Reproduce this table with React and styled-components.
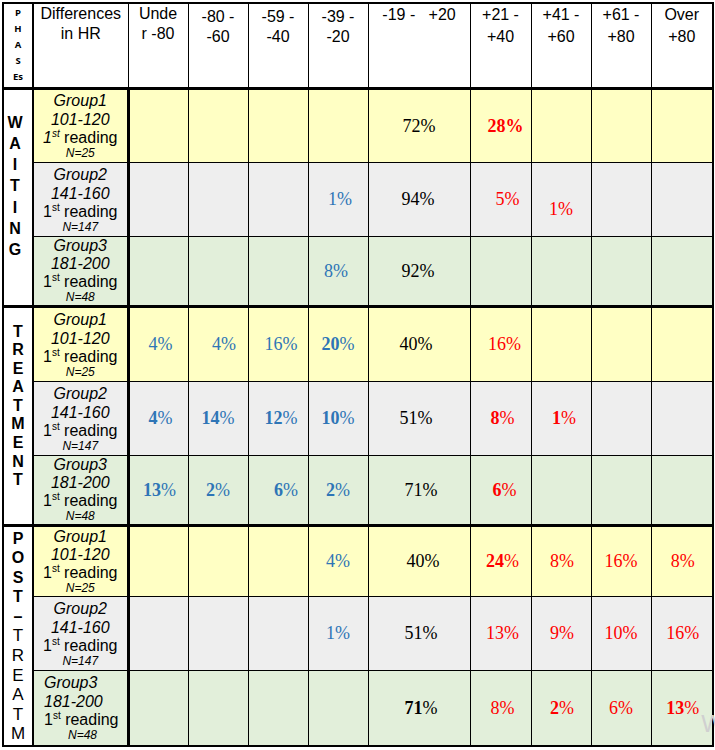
import React from 'react';
import styled, { createGlobalStyle } from 'styled-components';

const Global = createGlobalStyle`
  html, body {
    margin: 0;
    padding: 0;
    background: #fff;
  }
`;

const tints = {
  yellow: '#ffffc4',
  grey: '#eeeeee',
  green: '#e2efda',
};

const tones = {
  blue: '#2e75b6',
  red: '#ff0000',
  black: '#000000',
};

const Page = styled.div`
  position: relative;
  width: 715px;
  height: 750px;
  padding: 2px 0 0 2px;
  box-sizing: border-box;
  overflow: hidden;
`;

const Table = styled.table`
  border-collapse: collapse;
  table-layout: fixed;
  width: 711px;
  border: 2px solid #000;
  font-family: 'Liberation Sans', Arial, sans-serif;
  color: #000;
`;

const Col = styled.col`
  width: ${(p) => p.$w}px;
`;

const Row = styled.tr`
  height: ${(p) => p.$h}px;
`;

const HeadCell = styled.th`
  border: 1px solid #000;
  border-bottom: 3px solid #000;
  padding: ${(p) => p.$top}px 0 0 0;
  vertical-align: top;
  font-weight: normal;
  font-size: 16px;
  line-height: ${(p) => p.$lh}px;
  white-space: pre;
  text-align: center;
`;

const PhaseHead = styled.th`
  border: 1px solid #000;
  border-right: 2px solid #000;
  border-bottom: 3px solid #000;
  padding: 1px 0 0 0;
  vertical-align: top;
  font-family: 'Open Sans', 'Liberation Sans', sans-serif;
  font-weight: bold;
  font-size: 9.5px;
  line-height: 16px;
  text-align: center;
`;

const PhaseCell = styled.td`
  border: 1px solid #000;
  border-right: 2px solid #000;
  border-top: 3px solid #000;
  padding: ${(p) => p.$top}px 0 0 0;
  vertical-align: top;
  background: #fff;
`;

const Letters = styled.div`
  display: flex;
  flex-direction: column;
  align-items: center;
  padding-right: ${(p) => p.$right || 0}px;
`;

const Letter = styled.span`
  font-size: ${(p) => (p.$bold ? 16 : 17)}px;
  font-weight: ${(p) => (p.$bold ? 'bold' : 'normal')};
  line-height: ${(p) => p.$lh}px;
`;

const GroupCell = styled.td`
  border: 1px solid #000;
  border-right: 3px solid #000;
  border-top: ${(p) => (p.$first ? '3px' : '1px')} solid #000;
  background: ${(p) => tints[p.$bg]};
  padding: 0 0 0 ${(p) => (p.$left ? 10 : 0)}px;
  vertical-align: middle;
  text-align: ${(p) => (p.$left ? 'left' : 'center')};
  font-size: 16px;
`;

const Line = styled.div`
  line-height: ${(p) => p.$lh}px;
  font-style: ${(p) => (p.$italic ? 'italic' : 'normal')};
`;

const Small = styled.div`
  font-size: 12px;
  line-height: 13px;
  font-style: italic;
  padding-left: ${(p) => p.$indent || 0}px;
`;

const Sup = styled.sup`
  font-size: 10px;
  line-height: 0;
  vertical-align: 6px;
`;

const DataCell = styled.td`
  border: 1px solid #000;
  border-top: ${(p) => (p.$first ? '3px' : '1px')} solid #000;
  background: ${(p) => tints[p.$bg]};
  text-align: center;
  vertical-align: middle;
  padding: ${(p) => Math.max(p.$dy, 0)}px ${(p) => Math.max(-p.$dx * 2, 0)}px 0
    ${(p) => Math.max(p.$dx * 2, 0)}px;
  font-family: 'Liberation Serif', 'Times New Roman', serif;
  font-size: 18px;
  line-height: 20px;
  color: ${(p) => tones[p.$tone]};
`;

const Digits = styled.span`
  font-weight: ${(p) => (p.$bold ? 'bold' : 'normal')};
`;

const Mark = styled.span`
  position: absolute;
  right: -9px;
  bottom: 12px;
  font-family: 'Liberation Sans', Arial, sans-serif;
  font-size: 24px;
  color: #d0d0d0;
`;

const widths = [30, 95, 60, 60, 60, 60, 102, 61, 60, 60, 62];

const headers = [
  { t: 'Unde\nr -80', top: 0, lh: 20 },
  { t: '-80 -\n-60', top: 3, lh: 20 },
  { t: '-59 -\n-40', top: 3, lh: 20 },
  { t: '-39 -\n-20', top: 3, lh: 20 },
  { t: '-19 -   +20', top: 0, lh: 22 },
  { t: '+21 -\n+40', top: 0, lh: 22 },
  { t: '+41 -\n+60', top: 0, lh: 22 },
  { t: '+61 -\n+80', top: 0, lh: 22 },
  { t: 'Over\n+80', top: 0, lh: 22 },
];

const colTone = ['blue', 'blue', 'blue', 'blue', 'black', 'red', 'red', 'red', 'red'];

// n: digits, b: bold digits, all: bold incl. %, dx/dy nudges
const v = (n, opts = {}) => ({ n, ...opts });

const roomy = [19, 19, 18];
const tight = [18, 18, 18];

const sections = [
  {
    letters: 'WAITING'.split('').map((c) => ({ c, bold: true })),
    lh: 21.3,
    top: 22,
    right: 6,
    rows: [
      {
        h: 74, bg: 'yellow', g: 'Group1', r: '101-120', n: 'N=25', italicOne: true, lines: roomy,
        cells: [null, null, null, null, v('72'), v('28', { b: true, all: true, dx: 5 }), null, null, null],
      },
      {
        h: 74, bg: 'grey', g: 'Group2', r: '141-160', n: 'N=147', lines: roomy,
        cells: [null, null, null, v('1', { dx: 2 }), v('94', { dx: -1 }), v('5', { dx: 7 }), v('1', { dy: 20 }), null, null],
      },
      {
        h: 70, bg: 'green', g: 'Group3', r: '181-200', n: 'N=48', lines: tight,
        cells: [null, null, null, v('8', { dx: -2 }), v('92', { dx: -1 }), null, null, null, null],
      },
    ],
  },
  {
    letters: 'TREATMENT'.split('').map((c) => ({ c, bold: true })),
    lh: 18.6,
    top: 15,
    rows: [
      {
        h: 75, bg: 'yellow', g: 'Group1', r: '101-120', n: 'N=25', lines: roomy,
        cells: [v('4', { dx: 2 }), v('4', { dx: 6 }), v('16', { dx: 3 }), v('20', { b: true }), v('40', { dx: -3 }), v('16', { dx: 4 }), null, null, null],
      },
      {
        h: 74, bg: 'grey', g: 'Group2', r: '141-160', n: 'N=147', lines: roomy,
        cells: [v('4', { b: true, dx: 2 }), v('14', { b: true }), v('12', { b: true, dx: 3 }), v('10', { b: true }), v('51', { dx: -3 }), v('8', { b: true, dx: 2 }), v('1', { b: true, dx: 3 }), null, null],
      },
      {
        h: 70, bg: 'green', g: 'Group3', r: '181-200', n: 'N=48', lines: tight,
        cells: [v('13', { b: true, dx: 1 }), v('2', { b: true }), v('6', { b: true, dx: 8 }), v('2', { b: true }), v('71', { dx: 2 }), v('6', { b: true, dx: 4 }), null, null, null],
      },
    ],
  },
  {
    letters: [
      ...'POST–'.split('').map((c) => ({ c, bold: true })),
      ...'TREATM'.split('').map((c) => ({ c, bold: false })),
    ],
    lh: 19.6,
    top: 2,
    rows: [
      {
        h: 71, bg: 'yellow', g: 'Group1', r: '101-120', n: 'N=25', lines: tight,
        cells: [null, null, null, v('4'), v('40', { dx: 4 }), v('24', { b: true, dx: 2 }), v('8', { dx: 1 }), v('16'), v('8', { dx: 1 })],
      },
      {
        h: 74, bg: 'grey', g: 'Group2', r: '141-160', n: 'N=147', lines: roomy,
        cells: [null, null, null, v('1'), v('51', { dx: 2 }), v('13', { dx: 2 }), v('9', { dx: 1 }), v('10'), v('16', { dx: 1 })],
      },
      {
        h: 76, bg: 'green', g: 'Group3', r: '181-200', n: 'N=48', left: true, lines: roomy,
        cells: [null, null, null, null, v('71', { b: true, dx: 2 }), v('8', { dx: 2 }), v('2', { b: true, dx: 1 }), v('6'), v('13', { b: true, dx: 1 })],
      },
    ],
  },
];

function Value({ cell }) {
  if (cell.all) return <Digits $bold>{cell.n}%</Digits>;
  return (
    <>
      <Digits $bold={cell.b}>{cell.n}</Digits>%
    </>
  );
}

function GroupLabel({ row, first }) {
  const [a, b, c] = row.lines;
  return (
    <GroupCell $bg={row.bg} $first={first} $left={row.left}>
      <Line $italic $lh={a}>{row.g}</Line>
      <Line $italic $lh={b}>{row.r}</Line>
      <Line $lh={c}>
        {row.italicOne ? <i>1<Sup>st</Sup></i> : <>1<Sup>st</Sup></>} reading
      </Line>
      <Small $indent={row.left ? 24 : 0}>{row.n}</Small>
    </GroupCell>
  );
}

export default function App() {
  return (
    <Page>
      <Global />
      <Table>
        <colgroup>
          {widths.map((w, i) => (
            <Col key={i} $w={w} />
          ))}
        </colgroup>
        <thead>
          <Row $h={85}>
            <PhaseHead>
              P<br />H<br />A<br />S<br />Es
            </PhaseHead>
            <HeadCell $top={0} $lh={20}>{'Differences\nin HR'}</HeadCell>
            {headers.map((h, i) => (
              <HeadCell key={i} $top={h.top} $lh={h.lh}>
                {h.t}
              </HeadCell>
            ))}
          </Row>
        </thead>
        <tbody>
          {sections.map((s, si) =>
            s.rows.map((row, ri) => (
              <Row key={`${si}-${ri}`} $h={row.h}>
                {ri === 0 && (
                  <PhaseCell rowSpan={3} $top={s.top}>
                    <Letters $right={s.right}>
                      {s.letters.map((l, li) => (
                        <Letter key={li} $bold={l.bold} $lh={s.lh}>
                          {l.c}
                        </Letter>
                      ))}
                    </Letters>
                  </PhaseCell>
                )}
                <GroupLabel row={row} first={ri === 0} />
                {row.cells.map((cell, ci) => (
                  <DataCell
                    key={ci}
                    $bg={row.bg}
                    $first={ri === 0}
                    $tone={colTone[ci]}
                    $dx={cell ? cell.dx || 0 : 0}
                    $dy={cell ? cell.dy || 0 : 0}
                  >
                    {cell && <Value cell={cell} />}
                  </DataCell>
                ))}
              </Row>
            ))
          )}
        </tbody>
      </Table>
      <Mark>W</Mark>
    </Page>
  );
}
